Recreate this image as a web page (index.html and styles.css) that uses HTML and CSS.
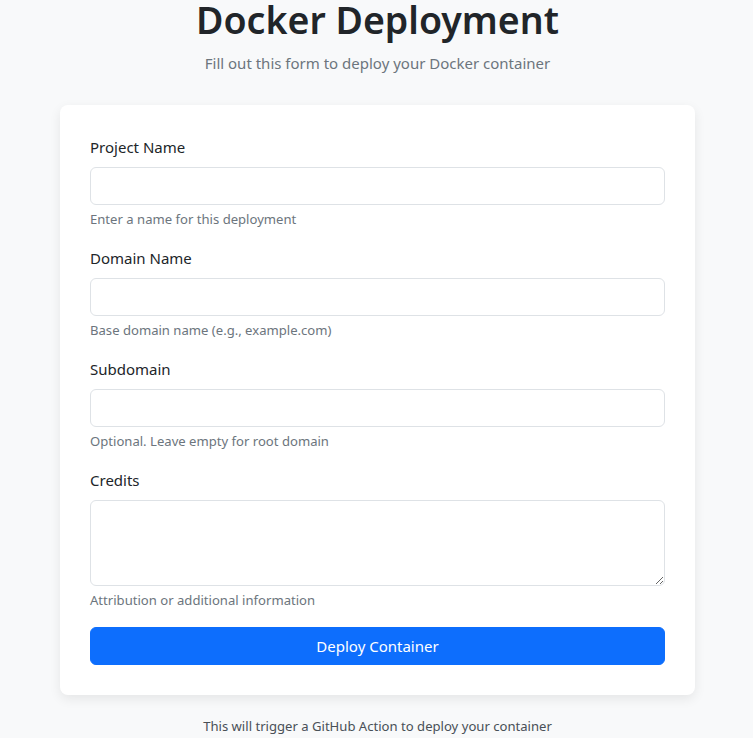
FILE: index.html
```html
<!DOCTYPE html>
<html lang="en">
<head>
<meta charset="utf-8">
<title>Docker Deployment</title>
<link rel="stylesheet" href="styles.css">
</head>
<body>
<main class="page">
  <header class="head">
    <h1 class="title">Docker Deployment</h1>
    <p class="lead">Fill out this form to deploy your Docker container</p>
  </header>
  <form class="card">
    <div class="group">
      <label class="label" for="project">Project Name</label>
      <input class="control" id="project" type="text">
      <div class="help">Enter a name for this deployment</div>
    </div>
    <div class="group">
      <label class="label" for="domain">Domain Name</label>
      <input class="control" id="domain" type="text">
      <div class="help">Base domain name (e.g., example.com)</div>
    </div>
    <div class="group">
      <label class="label" for="sub">Subdomain</label>
      <input class="control" id="sub" type="text">
      <div class="help">Optional. Leave empty for root domain</div>
    </div>
    <div class="group">
      <label class="label" for="credits">Credits</label>
      <textarea class="control area" id="credits" rows="3"></textarea>
      <div class="help">Attribution or additional information</div>
    </div>
    <button class="btn" type="button">Deploy Container</button>
  </form>
  <p class="foot">This will trigger a GitHub Action to deploy your container</p>
</main>
</body>
</html>
```

FILE: styles.css
```css
* { box-sizing: border-box; }
html, body { margin: 0; padding: 0; }
body {
  background: #f8f9fa;
  color: #212529;
  font-family: "Noto Sans", "Open Sans", sans-serif;
  font-size: 15px;
  line-height: 24px;
}
.page {
  width: 635px;
  margin: 0 58px 0 60px;
}
.head {
  text-align: center;
}
.title {
  margin: 0;
  font-size: 37.5px;
  line-height: 40px;
  font-weight: 600;
}
.lead {
  margin: 10px 0 0;
  padding-top: 1px;
  color: #6c757d;
  font-size: 15px;
  line-height: 24px;
}
.card {
  margin-top: 30px;
  background: #fff;
  border-radius: 8px;
  box-shadow: 0 4px 12px rgba(0, 0, 0, 0.08);
  padding: 30px;
  display: flex;
  flex-direction: column;
}
.group {
  display: flex;
  flex-direction: column;
  margin-bottom: 16px;
}
.label {
  margin-bottom: 8px;
}
.control {
  display: block;
  width: 100%;
  height: 38px;
  border: 1px solid #dee2e6;
  border-radius: 6px;
  background: #fff;
  padding: 6px 12px;
  font: inherit;
}
.area {
  height: 86px;
  resize: vertical;
}
.help {
  margin-top: 4px;
  font-size: 13.1px;
  line-height: 21px;
  color: #6c757d;
}
.btn {
  height: 38px;
  border: 1px solid #0d6efd;
  border-radius: 6px;
  background: #0d6efd;
  color: #fff;
  font: inherit;
}
.foot {
  margin: 21px 0 0;
  text-align: center;
  font-size: 13.1px;
  line-height: 21px;
  color: #495057;
}
```
